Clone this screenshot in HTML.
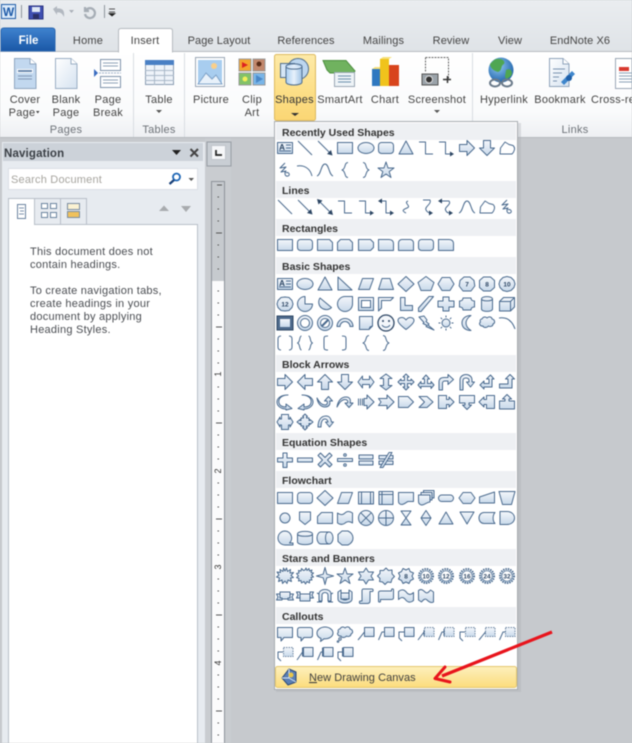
<!DOCTYPE html>
<html><head><meta charset="utf-8"><style>
html,body{margin:0;padding:0;background:#c6c9cd;width:632px;height:743px;overflow:hidden}
svg{display:block;filter:blur(.4px)}
text{font-family:"Liberation Sans",sans-serif;font-size:11px;fill:#444;letter-spacing:.25px}
.m{text-anchor:middle}
.h{font-weight:bold;font-size:10.5px;fill:#333;letter-spacing:0}
.i{fill:url(#g);stroke:#4a6a8e;stroke-width:1;stroke-linejoin:round}
.l{fill:none;stroke:#4a6a8e;stroke-width:1;stroke-linejoin:round}
.n{font-size:6.5px;font-weight:bold;fill:#2d4664;text-anchor:middle;letter-spacing:0}
</style></head><body>
<svg width="632" height="743" viewBox="0 0 632 743" xmlns="http://www.w3.org/2000/svg">
<defs>
<linearGradient id="g" x1="0" y1="0" x2="0" y2="1"><stop offset="0" stop-color="#f4f7fb"/><stop offset="1" stop-color="#c8d9ea"/></linearGradient>
<linearGradient id="top" x1="0" y1="0" x2="0" y2="1"><stop offset="0" stop-color="#eaedf0"/><stop offset="1" stop-color="#dfe3e7"/></linearGradient>
<linearGradient id="rib" x1="0" y1="0" x2="0" y2="1"><stop offset="0" stop-color="#fff"/><stop offset=".7" stop-color="#fafbfc"/><stop offset="1" stop-color="#eef0f3"/></linearGradient>
<linearGradient id="file" x1="0" y1="0" x2="0" y2="1"><stop offset="0" stop-color="#3f83cf"/><stop offset="1" stop-color="#1a57a6"/></linearGradient>
<linearGradient id="yel" x1="0" y1="0" x2="0" y2="1"><stop offset="0" stop-color="#fdeaa8"/><stop offset=".5" stop-color="#fde08a"/><stop offset="1" stop-color="#fbd674"/></linearGradient>
<linearGradient id="yel2" x1="0" y1="0" x2="0" y2="1"><stop offset="0" stop-color="#fdf0bd"/><stop offset="1" stop-color="#fcdc7c"/></linearGradient>
<linearGradient id="doc" x1="0" y1="0" x2="1" y2="1"><stop offset="0" stop-color="#fff"/><stop offset="1" stop-color="#d5e2f0"/></linearGradient>
<linearGradient id="blue" x1="0" y1="0" x2="1" y2="0"><stop offset="0" stop-color="#a9cdf0"/><stop offset=".5" stop-color="#e8f2fb"/><stop offset="1" stop-color="#9cc0e4"/></linearGradient>
<radialGradient id="globe" cx=".4" cy=".35" r=".7"><stop offset="0" stop-color="#8fc8f2"/><stop offset="1" stop-color="#1b5fa8"/></radialGradient>

<symbol id="tb" width="18" height="18"><rect class="i" x="1.500" y="3.500" width="15" height="11"/><text x="6" y="11" style="font-size:8px;font-weight:bold;fill:#2d4664;text-anchor:middle;letter-spacing:0">A</text><path class="l" d="M10 6h5M10 9h5M3 12h12"/></symbol>
<symbol id="ln" width="18" height="18"><path class="l" d="M2 2L16 16"/></symbol>
<symbol id="ar" width="18" height="18"><path class="l" d="M2 2L15 15"/><path d="M16.500 16.500L11 15L15 11Z" fill="#2d4664"/></symbol>
<symbol id="da2" width="18" height="18"><path class="l" d="M3 3L15 15"/><path d="M17 17L11.500 15.500L15.500 11.500ZM1 1L6.500 2.500L2.500 6.500Z" fill="#2d4664"/></symbol>
<symbol id="rc" width="18" height="18"><rect class="i" x="1.500" y="3.500" width="15" height="11"/></symbol>
<symbol id="el" width="18" height="18"><ellipse class="i" cx="9" cy="9" rx="8" ry="5.500"/></symbol>
<symbol id="rr" width="18" height="18"><rect class="i" x="1.500" y="3.500" width="15" height="11" rx="3"/></symbol>
<symbol id="tr" width="18" height="18"><path class="i" d="M9 2L16 15H2Z"/></symbol>
<symbol id="e1" width="18" height="18"><path class="l" d="M2 3H8.500V15H16"/></symbol>
<symbol id="e2" width="18" height="18"><path class="l" d="M2 3H8.500V15H14"/><path d="M17 15L13 12.500V17.500Z" fill="#2d4664"/></symbol>
<symbol id="e3" width="18" height="18"><path class="l" d="M4 3H9V15H14"/><path d="M17 15L13 12.500V17.500ZM1 3L5 .5V5.500Z" fill="#2d4664"/></symbol>
<symbol id="cv" width="18" height="18"><path class="l" d="M11 3C6 5 15 8 10 10S5 13 9 15"/></symbol>
<symbol id="cva" width="18" height="18"><path class="l" d="M6 2H13C15 6 7 9 9 12C10 14 12 15 13 15"/><path d="M16 15L12 12.500V17.500Z" fill="#2d4664"/></symbol>
<symbol id="cvb" width="18" height="18"><path class="l" d="M4 3H12C15 7 6 9 9 13C10 15 12 15 13 15"/><path d="M16 15L12 12.500V17.500ZM1 3L5 .5V5.500Z" fill="#2d4664"/></symbol>
<symbol id="wv" width="18" height="18"><path class="l" d="M1 15C5 14 5 3 9 3S13 14 17 15"/></symbol>
<symbol id="fm" width="18" height="18"><path class="l" d="M2 15L2.500 9L7 3L11 5.500L15 6.500C18 9 16 13 14 15Z"/></symbol>
<symbol id="sq" width="18" height="18"><path class="l" d="M9 2L4 7L10 6L5 11L10 10C8 12 9 16 12 15C15 14 12 10 10 12"/></symbol>
<symbol id="bow" width="18" height="18"><path class="l" d="M1 5C8 4 14 7 16 15"/></symbol>
<symbol id="lb" width="18" height="18"><path class="l" d="M12 1.500C8 1.500 10 8 6 9C10 10 8 16.500 12 16.500"/></symbol>
<symbol id="rb" width="18" height="18"><path class="l" d="M6 1.500C10 1.500 8 8 12 9C8 10 10 16.500 6 16.500"/></symbol>
<symbol id="st" width="18" height="18"><path class="i" d="M9 1L11 7H17L12.200 10.600L14 16.500L9 13L4 16.500L5.800 10.600L1 7H7Z"/></symbol>
<symbol id="rA" width="18" height="18"><path class="i" d="M1.500 5.500H9V1.500L16.500 9L9 16.500V12.500H1.500Z"/></symbol>
<symbol id="lA" width="18" height="18"><path class="i" d="M16.500 5.500H9V1.500L1.500 9L9 16.500V12.500H16.500Z"/></symbol>
<symbol id="uA" width="18" height="18"><path class="i" d="M5.500 16.500V9H1.500L9 1.500L16.500 9H12.500V16.500Z"/></symbol>
<symbol id="dA" width="18" height="18"><path class="i" d="M5.500 1.500V9H1.500L9 16.500L16.500 9H12.500V1.500Z"/></symbol>

<symbol id="s1" width="18" height="18"><path class="i" d="M1.500 3.500H13.500L16.500 6.500V14.500H1.500Z"/></symbol>
<symbol id="s2" width="18" height="18"><path class="i" d="M4.500 3.500H13.500L16.500 6.500V14.500H1.500V6.500Z"/></symbol>
<symbol id="s3" width="18" height="18"><path class="i" d="M4.500 3.500H13.500L16.500 6.500V11.500L13.500 14.500H1.500V3.500Z"/></symbol>
<symbol id="s4" width="18" height="18"><path class="i" d="M1.500 3.500H12C15 3.500 16.500 5 16.500 8V14.500H1.500Z"/></symbol>
<symbol id="s5" width="18" height="18"><path class="i" d="M5 3.500H13C15 3.500 16.500 5 16.500 7V14.500H1.500V7C1.500 5 3 3.500 5 3.500Z"/></symbol>
<symbol id="rt" width="18" height="18"><path class="i" d="M2 2L16 15H2Z"/></symbol>
<symbol id="pa" width="18" height="18"><path class="i" d="M5.500 3.500H16.500L12.500 14.500H1.500Z"/></symbol>
<symbol id="tz" width="18" height="18"><path class="i" d="M5 3.500H13L16.500 14.500H1.500Z"/></symbol>
<symbol id="di" width="18" height="18"><path class="i" d="M9 1.500L17 9L9 16.500L1 9Z"/></symbol>
<symbol id="pe" width="18" height="18"><path class="i" d="M9 1.500L17 7.500L14 15.500H4L1 7.500Z"/></symbol>
<symbol id="he" width="18" height="18"><path class="i" d="M5 2.500H13L17 9L13 15.500H5L1 9Z"/></symbol>
<symbol id="n7" width="18" height="18"><path class="i" d="M6 2H12L16 5.500L16.800 11L13 16H5L1.200 11L2 5.500Z"/><text class="n" x="9" y="11.500">7</text></symbol>
<symbol id="n8" width="18" height="18"><path class="i" d="M5.500 2H12.500L16.500 5.500V12.500L12.500 16H5.500L1.500 12.500V5.500Z"/><text class="n" x="9" y="11.500">8</text></symbol>
<symbol id="n10" width="18" height="18"><path class="i" d="M5 2.500L9 1.500L13 2.500L16 5.500L17 9L16 12.500L13 15.500L9 16.500L5 15.500L2 12.500L1 9L2 5.500Z"/><text class="n" x="9" y="11.500">10</text></symbol>
<symbol id="n12" width="18" height="18"><path class="i" d="M5 2.500L9 2L13 2.500L16 5.500L17 9L16 12.500L13 15.500L9 16L5 15.500L2 12.500L1 9L2 5.500Z"/><text class="n" x="9" y="11.500">12</text></symbol>
<symbol id="pie" width="18" height="18"><path class="i" d="M9 9H16.500A7.500 7.500 0 1 1 9 1.500Z"/></symbol>
<symbol id="cho" width="18" height="18"><path class="i" d="M4 3L15.500 12.500A7.500 7.500 0 0 1 4 3Z"/></symbol>
<symbol id="tea" width="18" height="18"><path class="i" d="M16.500 1.500V9A7.500 7.500 0 1 1 9 1.500Z"/></symbol>
<symbol id="fr" width="18" height="18"><rect class="i" x="1.500" y="2.500" width="15" height="13"/><rect x="4.500" y="5.500" width="9" height="7" fill="#fff" stroke="#4a6a8e"/></symbol>
<symbol id="hf" width="18" height="18"><path class="i" d="M1.500 2.500H16.500L13.500 5.500H4.500V13L1.500 16Z"/></symbol>
<symbol id="L" width="18" height="18"><path class="i" d="M3.500 2.500H8V10.500H15.500V15.500H3.500Z"/></symbol>
<symbol id="dg" width="18" height="18"><path class="i" d="M12 1.500H16.500L4 16.500H1.500V13Z"/></symbol>
<symbol id="cr" width="18" height="18"><path class="i" d="M6 2H12V6H17V12H12V16H6V12H1V6H6Z"/></symbol>
<symbol id="pl" width="18" height="18"><path class="i" d="M5 3H13C13 5 14.500 6 16.500 6V12C14.500 12 13 13 13 15H5C5 13 3.500 12 1.500 12V6C3.500 6 5 5 5 3Z"/></symbol>
<symbol id="can" width="18" height="18"><path class="i" d="M3.500 4C3.500 .8 14.500 .8 14.500 4V14C14.500 17.200 3.500 17.200 3.500 14Z"/><path class="l" d="M3.500 4C3.500 6.500 14.500 6.500 14.500 4"/></symbol>
<symbol id="cu" width="18" height="18"><path class="i" d="M1.500 6.500L5.500 2.500H16.500V12L12.500 16H1.500Z"/><path class="l" d="M1.500 6.500H12.500V16M12.500 6.500L16.500 2.500"/></symbol>
<symbol id="be" width="18" height="18"><rect x="1" y="2" width="16" height="14" fill="#4d6a8c" stroke="#2d4664"/><rect x="4" y="5" width="10" height="8" fill="url(#g)"/></symbol>
<symbol id="do" width="18" height="18"><circle class="i" cx="9" cy="9" r="7.500"/><circle cx="9" cy="9" r="4.500" fill="#fff" stroke="#4a6a8e"/></symbol>
<symbol id="no" width="18" height="18"><circle class="i" cx="9" cy="9" r="7.500"/><circle cx="9" cy="9" r="4.500" fill="#fff" stroke="#4a6a8e"/><path d="M5.500 12.500L12.500 5.500" stroke="#4a6a8e" stroke-width="2"/></symbol>
<symbol id="bl" width="18" height="18"><path class="i" d="M1 12.500A8 8 0 0 1 17 12.500H14A5 5 0 0 0 4 12.500Z"/></symbol>
<symbol id="fo" width="18" height="18"><path class="i" d="M2.500 2.500H15.500V12L12 15.500H2.500Z"/><path class="l" d="M12 15.500L13 13L15.500 12"/></symbol>
<symbol id="sm" width="18" height="18"><circle cx="9" cy="9" r="8" fill="#f4f7fb" stroke="#2d4664" stroke-width="1.300"/><circle cx="6" cy="7" r="1" fill="#2d4664"/><circle cx="12" cy="7" r="1" fill="#2d4664"/><path class="l" d="M5 11C7 14 11 14 13 11"/></symbol>
<symbol id="ht" width="18" height="18"><path class="i" d="M9 15.500C3 11 1 8.500 1 6.500C1 3.500 6 2 9 6C12 2 17 3.500 17 6.500C17 8.500 15 11 9 15.500Z"/></symbol>
<symbol id="lg" width="18" height="18"><path class="i" d="M2 3L7 2L10 6L9 7.500L12 10L11 11L17 16L9 12.500L10 11.500L6 9.500L7 8.500Z"/></symbol>
<symbol id="su" width="18" height="18"><circle class="i" cx="9" cy="9" r="4"/><path class="l" d="M9 1.500V3.500M9 14.500V16.500M1.500 9H3.500M14.500 9H16.500M3.700 3.700L5.100 5.100M12.900 12.900L14.300 14.300M14.300 3.700L12.900 5.100M5.100 12.900L3.700 14.300"/></symbol>
<symbol id="mo" width="18" height="18"><path class="i" d="M13 1.500C7 1.500 4 5 4 9S7 16.500 13 16.500C9 14 8 11.500 8 9S9 4 13 1.500Z"/></symbol>
<symbol id="cl" width="18" height="18"><path class="i" d="M4 5C5 2.500 8 2.500 9 4C11 2 14 3 14 5C17 5.500 17.500 9 15 10C15 12.500 12 13 10.500 12C9 14 5.500 14 5 12C2 12.500 .5 9.500 2.500 8C1.500 6.500 2.500 5 4 5Z"/></symbol>
<symbol id="lk" width="18" height="18"><path class="l" d="M1 4C8 3 14 6 17 15"/></symbol>
<symbol id="bp" width="18" height="18"><path class="l" d="M5 2C2 2 2 4 2 5V13C2 14 2 16 5 16M13 2C16 2 16 4 16 5V13C16 14 16 16 13 16"/></symbol>
<symbol id="bq" width="18" height="18"><path class="l" d="M5.500 2C3 2 4.500 8 1.500 9C4.500 10 3 16 5.500 16M12.500 2C15 2 13.500 8 16.500 9C13.500 10 15 16 12.500 16"/></symbol>
<symbol id="lk2" width="18" height="18"><path class="l" d="M12 2C8 2 8 3 8 5V13C8 15 8 16 12 16"/></symbol>
<symbol id="rk2" width="18" height="18"><path class="l" d="M6 2C10 2 10 3 10 5V13C10 15 10 16 6 16"/></symbol>

<symbol id="lr" width="18" height="18"><path class="i" d="M1 9L5.500 3V6.500H12.500V3L17 9L12.500 15V11.500H5.500V15Z"/></symbol>
<symbol id="ud" width="18" height="18"><path class="i" d="M9 1L15 5.500H11.500V12.500H15L9 17L3 12.500H6.500V5.500H3Z"/></symbol>
<symbol id="qd" width="18" height="18"><path class="i" d="M9 1L12 4H10.500V7.500H14V6L17 9L14 12V10.500H10.500V14H12L9 17L6 14H7.500V10.500H4V12L1 9L4 6V7.500H7.500V4H6Z"/></symbol>
<symbol id="lru" width="18" height="18"><path class="i" d="M9 2L12.500 6H10.500V10.500H14V8.500L17 12L14 15.500V13.500H4V15.500L1 12L4 8.500V10.500H7.500V6H5.500Z"/></symbol>
<symbol id="bt" width="18" height="18"><path class="i" d="M2 17V9C2 6 4 4.500 7 4.500H11V1.500L16.500 6.500L11 11.500V8H8C6.500 8 5.500 9 5.500 10V17Z"/></symbol>
<symbol id="ut" width="18" height="18"><path class="i" d="M2 17V7C2 3.500 5 1.500 8 1.500S14 3.500 14 7V9H16.500L12.500 14L8.500 9H11V7.500C11 6 10 5 8 5S5 6 5 7.500V17Z"/></symbol>
<symbol id="lu" width="18" height="18"><path class="i" d="M2 12L6 8V10.500H11V6H8.500L12.500 2L16 6H14V14H6V16Z"/></symbol>
<symbol id="bu" width="18" height="18"><path class="i" d="M1.500 11H10V6H7.500L12 1.500L16.500 6H14V15H1.500Z"/></symbol>
<symbol id="cR" width="18" height="18"><path class="i" d="M12 2C5 2 2 6 3 10S8 14 10 14V11L16 15.500L10 17V16C5 16 1 13 1 9S5 2 12 2Z"/></symbol>
<symbol id="cL" width="18" height="18"><path class="i" d="M6 2C13 2 16 6 15 10S10 14 8 14V11L2 15.500L8 17V16C13 16 17 13 17 9S13 2 6 2Z"/></symbol>
<symbol id="cU" width="18" height="18"><path class="i" d="M1 5C2 12 6 14 9 14S15 12 13.500 8H16.500L12.500 3.500L8.500 8H11C12 10 11 12 9 12C6 12 3 9 1 5Z"/></symbol>
<symbol id="cD" width="18" height="18"><path class="i" d="M1 14C2 7 6 4 10 4S15 7 14 10H17L13 14.500L9 10H11.500C12.500 8 11 6.500 9 6.500C6 6.500 3 10 1 14Z"/></symbol>
<symbol id="sR" width="18" height="18"><path class="i" d="M7 5.500H10V2L17 9L10 16V12.500H7Z"/><path class="l" d="M1.500 5.500V12.500M3.500 5.500V12.500M5.500 5.500V12.500"/></symbol>
<symbol id="nR" width="18" height="18"><path class="i" d="M1.500 5.500H10V2L17 9L10 16V12.500H1.500L4 9Z"/></symbol>
<symbol id="pg" width="18" height="18"><path class="i" d="M1.500 3.500H11L16.500 9L11 14.500H1.500Z"/></symbol>
<symbol id="ch" width="18" height="18"><path class="i" d="M2 3.500H10L16 9L10 14.500H2L7.500 9Z"/></symbol>
<symbol id="cRc" width="18" height="18"><path class="i" d="M1.500 2.500H9.500V6.500H12V4L17 9L12 14V11.500H9.500V15.500H1.500Z"/></symbol>
<symbol id="cDc" width="18" height="18"><path class="i" d="M1.500 2.500H16.500V10H11V12H13.500L9 16.500L4.500 12H7V10H1.500Z"/></symbol>
<symbol id="cLc" width="18" height="18"><path class="i" d="M16.500 2.500H8.500V6.500H6V4L1 9L6 14V11.500H8.500V15.500H16.500Z"/></symbol>
<symbol id="cUc" width="18" height="18"><path class="i" d="M1.500 16V8H7V6H4.500L9 1.500L13.500 6H11V8H16.500V16Z"/></symbol>
<symbol id="cLR" width="18" height="18"><path class="i" d="M5.500 1.500H12.500V6H14V4L17 9L14 14V12H12.500V16.500H5.500V12H4V14L1 9L4 4V6H5.500Z"/></symbol>
<symbol id="cQ" width="18" height="18"><path class="i" d="M9 1L11.500 3.500H10.500V5H13V7.500H14V6.500L17 9L14 11.500V10.500H13V13H10.500V14.500H11.500L9 17L6.500 14.500H7.500V13H5V10.500H4V11.500L1 9L4 6.500V7.500H5V5H7.500V3.500H6.500Z"/></symbol>
<symbol id="ci" width="18" height="18"><path class="i" d="M2 14C2 7 5 3 10 3C14 3 15 6 15.500 9H17.500L13.500 14L9.500 9H12C11.500 7 10.500 6 9 6C6.500 6 5 9 5 14Z"/></symbol>

<symbol id="pls" width="18" height="18"><path class="i" d="M7 2H11V7H16.500V11H11V16.500H7V11H1.500V7H7Z"/></symbol>
<symbol id="min" width="18" height="18"><rect class="i" x="1.500" y="7" width="15" height="4"/></symbol>
<symbol id="mu" width="18" height="18"><path class="i" d="M4.500 2L9 6.500L13.500 2L16 4.500L11.500 9L16 13.500L13.500 16L9 11.500L4.500 16L2 13.500L6.500 9L2 4.500Z"/></symbol>
<symbol id="dv" width="18" height="18"><rect class="i" x="1.500" y="7.500" width="15" height="3"/><circle class="i" cx="9" cy="4" r="1.300"/><circle class="i" cx="9" cy="14" r="1.300"/></symbol>
<symbol id="eq" width="18" height="18"><rect class="i" x="2" y="4" width="14" height="4"/><rect class="i" x="2" y="10" width="14" height="4"/></symbol>
<symbol id="ne" width="18" height="18"><rect class="i" x="2" y="4.500" width="14" height="3.500"/><rect class="i" x="2" y="10" width="14" height="3.500"/><path class="i" d="M12 1.500H15L6 16.500H3Z"/></symbol>

<symbol id="fp" width="18" height="18"><rect class="i" x="1.500" y="3" width="15" height="12"/><path class="l" d="M4.500 3V15M13.500 3V15"/></symbol>
<symbol id="fi" width="18" height="18"><rect class="i" x="2" y="2.500" width="14" height="13"/><path class="l" d="M5 2.500V15.500M2 5.500H16"/></symbol>
<symbol id="fd" width="18" height="18"><path class="i" d="M1.500 3.500H16.500V12.500H11C9.500 13 7 15.500 5 15.500C2.500 15.500 1.500 14 1.500 12.500Z"/></symbol>
<symbol id="fm2" width="18" height="18"><path class="i" d="M6.500 1.500H17V9H15V3.500H6.500Z"/><path class="i" d="M4 3.500H15V11H13V6H4Z"/><path class="i" d="M1.500 6H13V13C10 13 7 16.500 4.500 16C2.500 15.500 1.500 14 1.500 12.500Z"/></symbol>
<symbol id="ft" width="18" height="18"><rect class="i" x="1.500" y="6" width="15" height="6.500" rx="3.200"/></symbol>
<symbol id="fpr" width="18" height="18"><path class="i" d="M5 3.500H13L17 9L13 14.500H5L1 9Z"/></symbol>
<symbol id="fmi" width="18" height="18"><path class="i" d="M1.500 8L16.500 3V14H1.500Z"/></symbol>
<symbol id="fmo" width="18" height="18"><path class="i" d="M1 2.500H17L13.500 15.500H4.500Z"/></symbol>
<symbol id="fc" width="18" height="18"><circle class="i" cx="9" cy="9" r="5"/></symbol>
<symbol id="fo2" width="18" height="18"><path class="i" d="M3.500 3H14.500V11L9 15.500L3.500 11Z"/></symbol>
<symbol id="fca" width="18" height="18"><path class="i" d="M5.500 3.500H16.500V14.500H1.500V7.500Z"/></symbol>
<symbol id="fta" width="18" height="18"><path class="i" d="M1.500 4C5 7 8 5 9.500 3.500C12 1.500 15 3 16.500 4V14C13 11.500 10 13 8.500 14.500C6 16 3.500 15.500 1.500 14Z"/></symbol>
<symbol id="fs" width="18" height="18"><circle class="i" cx="9" cy="9" r="7.500"/><path class="l" d="M3.800 3.800L14.200 14.200M14.200 3.800L3.800 14.200"/></symbol>
<symbol id="fo3" width="18" height="18"><circle class="i" cx="9" cy="9" r="7.500"/><path class="l" d="M1.500 9H16.500M9 1.500V16.500"/></symbol>
<symbol id="fco" width="18" height="18"><path class="i" d="M4 2H14L4 16H14Z"/></symbol>
<symbol id="fso" width="18" height="18"><path class="i" d="M9 1.500L14 9L9 16.500L4 9Z"/><path class="l" d="M4 9H14"/></symbol>
<symbol id="fe" width="18" height="18"><path class="i" d="M9 3L16 15H2Z"/></symbol>
<symbol id="fme" width="18" height="18"><path class="i" d="M2 3H16L9 15Z"/></symbol>
<symbol id="fst" width="18" height="18"><path class="i" d="M6 3.500H17C14.500 6 14.500 12 17 14.500H6C3 14.500 1 12 1 9S3 3.500 6 3.500Z"/></symbol>
<symbol id="fde" width="18" height="18"><path class="i" d="M2 2.500H9C13.500 2.500 16.500 5.500 16.500 9S13.500 15.500 9 15.500H2Z"/></symbol>
<symbol id="fq" width="18" height="18"><path class="i" d="M9 2A7 7 0 1 0 9 16H17V14H13.500A7 7 0 0 0 9 2Z"/></symbol>
<symbol id="fdk" width="18" height="18"><path class="i" d="M1.500 5C1.500 1.500 16.500 1.500 16.500 5V13C16.500 16.500 1.500 16.500 1.500 13Z"/><path class="l" d="M1.500 5C1.500 8 16.500 8 16.500 5"/></symbol>
<symbol id="fda" width="18" height="18"><path class="i" d="M5 3H13C15.500 3 17 6 17 9S15.500 15 13 15H5C2.500 15 1 12 1 9S2.500 3 5 3Z"/><path class="l" d="M13 3C10.500 3 9.500 6 9.500 9S10.500 15 13 15"/></symbol>
<symbol id="fdi" width="18" height="18"><path class="i" d="M6 2H12C15 3.500 17 6 17 9S15 14.500 12 16H6L2 12.500V5.500Z"/></symbol>

<symbol id="x1" width="18" height="18"><path class="i" d="M9 4L10.500 1L11.500 4.500L14.500 2.500L14 6L17.500 5.500L15 8.500L17.500 10.500L14.500 11L15.500 14.500L12 13L11 16.500L9 14L6.500 16.500L6 13L2.500 14.500L3.500 11L.5 10L3 8L1 5L4.500 5.500L4 2.500L7 4.500L7.500 1Z"/></symbol>
<symbol id="x2" width="18" height="18"><path class="i" d="M9 3L10 1L11 3.500L13 1.500L13.500 4L16 3L15 5.500L17.500 6L15.500 8L17.500 10L15 10.500L16 13L13.500 13L13.500 16L11 14.500L9.500 17L8 14.500L5.500 16L5 13.500L2.500 14L3 11.500L.5 10.500L2.500 9L.5 6.500L3 6L2.500 3.500L5 4L5.500 1.500L7.500 3.500Z"/></symbol>
<symbol id="s4s" width="18" height="18"><path class="i" d="M9 .5L10.800 7.200L17.500 9L10.800 10.800L9 17.500L7.200 10.800L.5 9L7.200 7.200Z"/></symbol>
<symbol id="s6" width="18" height="18"><path class="i" d="M9 1L11.500 5H16.500L14 9L16.500 13H11.500L9 17L6.500 13H1.500L4 9L1.500 5H6.500Z"/></symbol>
<symbol id="s7" width="18" height="18"><path class="i" d="M9 1L11.500 3.500L15 3L15 6.800L17.500 9.500L15 12L14 15.500L10.500 15L8 17.500L5.500 15L2.500 14.500L3 11.500L.5 9L3 6.500L3 3.500L6.500 3.500Z"/></symbol>
<symbol id="sn" width="18" height="18"><circle cx="9" cy="9" r="7" fill="url(#g)" stroke="#4a6a8e" stroke-width="2" stroke-dasharray="1.400 1"/><circle cx="9" cy="9" r="5.200" fill="#fff" stroke="#4a6a8e" stroke-width=".7"/></symbol>
<symbol id="s8" width="18" height="18"><path class="i" d="M6 1.500L9 3L12 1.500L13 4.500L16.500 6L15 9L16.500 12L13.500 13.500L12 16.500L9 15L6 16.500L4.500 13.500L1.500 12L3 9L1.500 6L4.500 4.500Z"/></symbol>
<symbol id="ru" width="18" height="18"><path class="i" d="M4 5H14V12H4Z"/><path class="i" d="M4 7H.5L2 10L.5 13H6V11H4ZM14 7H17.500L16 10L17.500 13H12V11H14Z"/></symbol>
<symbol id="rd" width="18" height="18"><path class="i" d="M4 7H14V14H4Z"/><path class="i" d="M4 5H.5L2 8L.5 11H4ZM14 5H17.500L16 8L17.500 11H14Z"/></symbol>
<symbol id="cu1" width="18" height="18"><path class="i" d="M3 14V7C3 4 6 2.500 9 2.500S15 4 15 7V14H12V8C12 6.500 10.500 5.500 9 5.500S6 6.500 6 8V14Z"/><path class="l" d="M1 6L3 7M17 6L15 7M1 15H6M12 15H17"/></symbol>
<symbol id="cu2" width="18" height="18"><path class="i" d="M5 3V10C5 12 7 13 9 13S13 12 13 10V3L16 5V12C16 15 12 16 9 16S2 15 2 12V5Z"/><path class="i" d="M5 6H13V12H5Z"/></symbol>
<symbol id="sc1" width="18" height="18"><path class="i" d="M6 2H15C16.500 2 16.500 4.500 15 4.500H13V14C13 16.500 11 16.500 10 16.500H3.500C2 16.500 2 14 3.500 14H5V4C5 3 5.500 2 6 2Z"/></symbol>
<symbol id="sc2" width="18" height="18"><path class="i" d="M1.500 5.500C1.500 4 3 4 4 4H14.500V3C14.500 1.500 16.500 1.500 16.500 3V11C16.500 12.500 15 12.500 14 12.500H3.500V14C3.500 15.500 1.500 15.500 1.500 14Z"/></symbol>
<symbol id="wa" width="18" height="18"><path class="i" d="M1.500 4.500C5 1.500 8 3 10 6C12 8 14 8 16.500 5.500V13.500C13 16.500 10 15 8 12C6 10 4 10 1.500 12.500Z"/></symbol>
<symbol id="wb" width="18" height="18"><path class="i" d="M1.500 3.500C4 1.500 6 3 8 5C10 7 12 5 13.500 3L16.500 5V15C14 16.500 12 15 10 13C8 11 6 13 4.500 15L1.500 13Z"/></symbol>

<symbol id="cb1" width="18" height="18"><path class="i" d="M1.500 2.500H16.500V12.500H8L5 16V12.500H1.500Z"/></symbol>
<symbol id="cb2" width="18" height="18"><path class="i" d="M4 2.500H14C15.500 2.500 16.500 3.500 16.500 5V10C16.500 11.500 15.500 12.500 14 12.500H8L5 16V12.500H4C2.500 12.500 1.500 11.500 1.500 10V5C1.500 3.500 2.500 2.500 4 2.500Z"/></symbol>
<symbol id="cb3" width="18" height="18"><path class="i" d="M5 13.500L4.500 16.500L8 13.800C13 14 17 11.500 17 8S13 2 9 2S1 4.500 1 8C1 10.500 2.500 12.500 5 13.500Z"/></symbol>
<symbol id="cb4" width="18" height="18"><path class="i" d="M4 4C5 1.500 8 1.500 9 3C11 1 14 2 14 4C17 4.500 17.500 8 15 9C15 11.500 12 12 10.500 11C9 13 5.500 13 5 11C2 11.500 .5 8.500 2.500 7C1.500 5.500 2.500 4 4 4Z"/><circle class="l" cx="4" cy="14" r="1.200"/><circle class="l" cx="2" cy="16.500" r=".8"/></symbol>
<symbol id="c1" width="18" height="18"><rect class="i" x="7.500" y="2.500" width="9.500" height="9"/><path class="l" d="M7.500 7L1 15"/></symbol>
<symbol id="c2" width="18" height="18"><rect class="i" x="7.500" y="2.500" width="9.500" height="9"/><path class="l" d="M7.500 7H5L1.500 15"/></symbol>
<symbol id="c3" width="18" height="18"><rect class="i" x="7.500" y="2.500" width="9.500" height="9"/><path class="l" d="M7.500 7H2V13L5 16"/></symbol>
<symbol id="c4" width="18" height="18"><rect x="7.500" y="2.500" width="9.500" height="9" fill="url(#g)" stroke="#6d86a3" stroke-dasharray="1.500 1"/><path class="l" d="M7 5V11M7 7L1 15"/></symbol>
<symbol id="c5" width="18" height="18"><rect x="7.500" y="2.500" width="9.500" height="9" fill="url(#g)" stroke="#6d86a3" stroke-dasharray="1.500 1"/><path class="l" d="M7 4V11M7 7H5L1.500 15"/></symbol>
<symbol id="c6" width="18" height="18"><rect x="7.500" y="2.500" width="9.500" height="9" fill="url(#g)" stroke="#6d86a3" stroke-dasharray="1.500 1"/><path class="l" d="M7 7H2V13L5 16"/></symbol>
<symbol id="c7" width="18" height="18"><rect x="7.500" y="2.500" width="9.500" height="9" fill="url(#g)" stroke="#6d86a3" stroke-dasharray="1.500 1"/><path class="l" d="M7.500 7L1 15"/></symbol>
<symbol id="c8" width="18" height="18"><rect x="7.500" y="2.500" width="9.500" height="9" fill="url(#g)" stroke="#6d86a3" stroke-dasharray="1.500 1"/><path class="l" d="M7.500 7H5L1.500 15"/></symbol>
<symbol id="c10" width="18" height="18"><rect class="i" x="7.500" y="2.500" width="9.500" height="9"/><path class="l" d="M6.500 2.500V11.500M6.500 7L1 15"/></symbol>
<symbol id="c11" width="18" height="18"><rect class="i" x="7.500" y="2.500" width="9.500" height="9"/><path class="l" d="M6.500 2.500V11.500M6.500 7H5L1.500 15"/></symbol>
<symbol id="c12" width="18" height="18"><rect class="i" x="7.500" y="2.500" width="9.500" height="9"/><path class="l" d="M6.500 2.500V11.500M6.500 7H2V13L5 16"/></symbol>
</defs>

<!-- base -->
<rect width="632" height="743" fill="#c6c9cd"/>
<rect width="632" height="52" fill="url(#top)"/>
<rect y="52" width="632" height="85" fill="url(#rib)"/>
<rect y="137" width="632" height="1" fill="#b6babf"/>
<rect y="51" x="0" width="632" height="1" fill="#b8bcc1"/>

<!-- QAT -->
<rect x="1.500" y="4.500" width="14" height="14" fill="#dcebfa" stroke="#1f5ca8"/>
<text x="8.500" y="16" class="m" style="font-size:12px;font-weight:bold;fill:#1d5aa8;letter-spacing:0">W</text>
<path d="M21.500 5V18M104.500 5V18" stroke="#8e959c"/>
<path d="M29 6H43V19H29Z" fill="#3f4fb2" stroke="#2a3380"/>
<rect x="32" y="7" width="8" height="5" fill="#dfe8f5"/><rect x="33" y="14" width="6" height="5" fill="#2a2f66"/>
<path d="M53 9L57 6V8.500C62 8 65 10 64 17C62 13 60 12 57 12.500V15Z" fill="#b2b8c0"/>
<path d="M69 10H74L71.500 13Z" fill="#aab0b8"/>
<path d="M85 7V11H89M86 10A5 5 0 1 1 85 14" fill="none" stroke="#a6adb5" stroke-width="2.200"/>
<path d="M109 9H115M109 12H115M112 16L109 13.500H115Z" fill="#222" stroke="#222" stroke-width=".8"/>

<!-- tabs -->
<path d="M1 51V31Q1 28 4 28H52Q55 28 55 31V51Z" fill="url(#file)" stroke="#2a66b0"/>
<text x="28.500" y="44" class="m" style="font-size:11.500px;font-weight:bold;fill:#fff;letter-spacing:0">File</text>
<path d="M118.500 52V31Q118.500 28.500 121 28.500H170Q172.500 28.500 172.500 31V52Z" fill="#fff" stroke="#b6babf"/>
<rect x="119" y="50" width="53" height="3" fill="#fff"/>
<g>
<text x="88" y="44" class="m" style="letter-spacing:.2px">Home</text>
<text x="145" y="44" class="m" style="letter-spacing:.2px">Insert</text>
<text x="219" y="44" class="m" style="letter-spacing:.1px">Page Layout</text>
<text x="306" y="44" class="m" style="letter-spacing:.1px">References</text>
<text x="383.500" y="44" class="m" style="letter-spacing:.1px">Mailings</text>
<text x="451" y="44" class="m" style="letter-spacing:.1px">Review</text>
<text x="510" y="44" class="m" style="letter-spacing:.1px">View</text>
<text x="580" y="44" class="m" style="letter-spacing:.1px">EndNote X6</text>
</g>

<!-- group separators -->
<path d="M133.500 53V137M184.500 53V137M472.500 53V137" stroke="#d9dde2"/>

<!-- shapes highlight -->
<rect x="274.500" y="54.500" width="41" height="66" rx="2" fill="url(#yel)" stroke="#dcb95e"/>

<!-- ribbon icons -->
<path d="M14.500 58.500H30L36 64V88.500H14.500Z" fill="#c2d8ef" stroke="#8ea6c0"/><path d="M30 58.500V64H36" fill="#fff" stroke="#8ea6c0"/>
<rect x="17" y="69" width="16" height="4" fill="#fff"/><rect x="18" y="70" width="14" height="2" fill="#6a88ad"/><path d="M18 76H32M18 79H32" stroke="#7f97b3"/>
<path d="M55.500 58.500H71L77 64V88.500H55.500Z" fill="url(#doc)" stroke="#9aaec4"/><path d="M71 58.500V64H77" fill="#fff" stroke="#9aaec4"/>
<rect x="100.500" y="59.500" width="20" height="11" fill="#fff" stroke="#8094ab"/><path d="M103 63H118M103 66H118" stroke="#8ea2b8"/>
<rect x="100.500" y="76.500" width="20" height="11" fill="#fff" stroke="#8094ab"/><path d="M103 80H118M103 83H118" stroke="#8ea2b8"/>
<path d="M94 69L98 73L94 77Z" fill="#3a6cc0"/><path d="M99 73H121" stroke="#9db0c6" stroke-dasharray="2 1"/>
<rect x="145.500" y="60.500" width="28" height="24" fill="#eef3f9" stroke="#8a9cb2"/><rect x="145" y="60" width="29" height="5" fill="#4a80c4"/>
<path d="M145 70.500H174M145 75.500H174M145 80.500H174M154.500 65V85M164.500 65V85" stroke="#a9b8c9"/>
<rect x="195.500" y="57.500" width="29" height="29" fill="#fff" stroke="#9aa7b6"/><rect x="198" y="60" width="24" height="24" fill="#a8cdef"/>
<circle cx="214" cy="66" r="3" fill="#f9cf8a"/><path d="M198 84L206 73L212 79L216 75L222 84Z" fill="#e8f1fa" stroke="#7ea2c8"/>
<rect x="239" y="59" width="12" height="12" fill="#f5a52c" stroke="#9a9a9a"/><rect x="253" y="59" width="12" height="12" fill="#c2886c" stroke="#9a9a9a"/><rect x="239" y="73" width="12" height="12" fill="#82c268" stroke="#9a9a9a"/><rect x="253" y="73" width="12" height="12" fill="#79b5e8" stroke="#9a9a9a"/>
<path d="M242 68L248 65L242 62Z" fill="#d22"/><circle cx="259" cy="64" r="2.500" fill="#5a2c18"/><circle cx="245" cy="79" r="2.500" fill="#f3ef5a"/><path d="M256 75L263 79L256 83Z" fill="#4a88c8"/>
<circle cx="298" cy="69" r="10.500" fill="#bcd6ef" stroke="#4e6d8e"/>
<rect x="280.500" y="63.500" width="14" height="14" fill="#d5e6f6" stroke="#4e6d8e"/>
<path d="M286 66.500C286 63 302 63 302 66.500V82C302 86 286 86 286 82Z" fill="url(#blue)" stroke="#4e6d8e"/><path d="M286 66.500C286 70 302 70 302 66.500" fill="#dcebfa" stroke="#4e6d8e"/>
<path d="M295 116L291 113H299Z" fill="#333"/>
<path d="M323 60.500H346L355 71L347 81H337V73H330L327 70Z" fill="#70b25f" stroke="#4d8f3f"/><rect x="334.500" y="72.500" width="20" height="14" fill="#eef3f7" stroke="#9aa7b4"/><path d="M338 76H351M338 79H351M338 82H351" stroke="#6c8fad"/>
<rect x="372" y="69" width="8" height="17" fill="#2f78c0"/><rect x="380" y="59" width="9" height="27" fill="#f0c31c"/><rect x="389" y="65" width="10" height="21" fill="#d8441c"/>
<path d="M380 59L383 57H392L389 59ZM372 69L375 67H380V69Z" fill="#f6e07a"/>
<path d="M425.500 57.500H448.500V79" fill="none" stroke="#666" stroke-dasharray="2 1"/><path d="M425.500 57.500V72" stroke="#666" stroke-dasharray="2 1"/>
<rect x="422" y="74" width="16" height="11" fill="#9ba3aa" stroke="#555"/><circle cx="429" cy="79.500" r="3.500" fill="#333" stroke="#ddd"/>
<path d="M443 79.500H451M447.500 76V83" stroke="#333" stroke-width="1.500"/>
<path d="M437 113L434 110H440Z" fill="#555"/>
<circle cx="501" cy="70" r="12.500" fill="url(#globe)"/><path d="M494 60C499 57 506 60 504 64C500 66 503 70 498 72C494 71 490 68 490 64ZM506 70C510 68 512 70 512 74C510 78 506 80 505 77Z" fill="#4fa652"/>
<g fill="none" stroke="#6a7a8a" stroke-width="2"><ellipse cx="495" cy="83" rx="5" ry="3.500"/><ellipse cx="507" cy="83" rx="5" ry="3.500"/></g>
<path d="M549.500 58.500H563L569 64V86.500H549.500Z" fill="url(#doc)" stroke="#8ea2ba"/><path d="M563 58.500V64H569" fill="#fff" stroke="#8ea2ba"/><path d="M553 69H565M553 73H562M553 77H559M553 81H557" stroke="#7a93b0"/>
<path d="M561 82L572 71L575 74L564 85Z" fill="#3f86cc"/><circle cx="569" cy="78" r="3" fill="#1f5fa8"/>
<path d="M615.500 58.500H632V88.500H615.500Z" fill="#fff" stroke="#9aa7b6"/><rect x="619" y="67" width="10" height="4" fill="#d83a30"/><path d="M619 73H632M619 76H632M619 79H632M619 82H632" stroke="#8aa0b8"/>

<!-- ribbon labels -->
<g>
<text x="25" y="103" class="m">Cover</text><text x="22" y="116" class="m">Page</text><path d="M36 111L39.500 111L37.750 113.500Z" fill="#444"/>
<text x="66" y="103" class="m">Blank</text><text x="66" y="116" class="m">Page</text>
<text x="108" y="103" class="m">Page</text><text x="108" y="116" class="m">Break</text>
<text x="159" y="103" class="m">Table</text><path d="M156 110H162L159 113Z" fill="#555"/>
<text x="211" y="103" class="m">Picture</text>
<text x="252" y="103" class="m">Clip</text><text x="252" y="116" class="m">Art</text>
<text x="294.500" y="103" class="m" style="fill:#333">Shapes</text>
<text x="340" y="103" class="m">SmartArt</text>
<text x="385" y="103" class="m">Chart</text>
<text x="437" y="103" class="m">Screenshot</text>
<text x="504" y="103" class="m">Hyperlink</text>
<text x="560" y="103" class="m">Bookmark</text>
<text x="591" y="103">Cross-re</text>
<text x="66" y="133" class="m" style="fill:#6d7278">Pages</text>
<text x="159" y="133" class="m" style="fill:#6d7278">Tables</text>
<text x="575" y="133" class="m" style="fill:#6d7278">Links</text>
</g>

<!-- nav pane -->
<rect x="2" y="142" width="203" height="601" fill="#e7ebf0"/>
<rect x="3" y="143" width="200" height="18" fill="#ccd2d9"/>
<text x="4" y="157" style="font-weight:bold;font-size:11.500px;fill:#3a3f45;letter-spacing:.15px">Navigation</text>
<path d="M172 150H181L176.500 155Z" fill="#222"/>
<path d="M190.500 149L198 156.500M198 149L190.500 156.500" stroke="#444" stroke-width="2"/>
<rect x="8.500" y="168.500" width="189" height="21" fill="#fff" stroke="#dbe0e6"/>
<text x="11" y="183" style="fill:#a6a49e;letter-spacing:.2px">Search Document</text>
<circle cx="176.500" cy="177" r="3.500" fill="none" stroke="#1e66b5" stroke-width="1.800"/><path d="M174 180L169.500 184" stroke="#173f78" stroke-width="2.200"/>
<path d="M188.500 178H194L191.250 181Z" fill="#555"/>
<!-- nav tabs -->
<rect x="8.500" y="224.500" width="189" height="530" fill="#fff" stroke="#b8bfc8"/>
<path d="M34.500 224V198.500H86.500V224M60.500 198.500V224" fill="none" stroke="#b8bfc8"/>
<path d="M8.500 225V198.500H34.500V225Z" fill="#fff"/><path d="M8.500 225V198.500H34.500V225" fill="none" stroke="#b8bfc8"/>
<rect x="17.500" y="204.500" width="8" height="14" fill="#fff" stroke="#6c84a0"/><path d="M19 208H24M20 211H24M19 214H24" stroke="#7c92ac"/>
<path d="M41.500 203.500H47.500V208.500H41.500ZM50.500 203.500H56.500V208.500H50.500ZM41.500 212.500H47.500V217.500H41.500ZM50.500 212.500H56.500V217.500H50.500Z" fill="#fff" stroke="#6c84a0"/>
<rect x="67.500" y="203.500" width="12" height="6" fill="#fbf2d2" stroke="#7a8ca0"/><rect x="67.500" y="211.500" width="12" height="6" fill="#f0c15c" stroke="#7a8ca0"/>
<path d="M159 211L164 205.500L169 211Z" fill="#a8abae"/><path d="M181 206H191L186 212Z" fill="#a8abae"/>
<g>
<text x="30" y="255" style="fill:#4a4d52">This document does not</text><text x="30" y="268" style="fill:#4a4d52">contain headings.</text>
<text x="30" y="294" style="fill:#4a4d52">To create navigation tabs,</text><text x="30" y="307" style="fill:#4a4d52">create headings in your</text><text x="30" y="320" style="fill:#4a4d52">document by applying</text><text x="30" y="333" style="fill:#4a4d52">Heading Styles.</text>
</g>

<!-- ruler -->
<rect x="205" y="138" width="26" height="605" fill="#c9ccd0"/>
<rect x="207" y="142" width="24" height="24" fill="#c9ced4" stroke="#979da4"/>
<rect x="211.500" y="145.500" width="14" height="14" fill="#f6f7f9" stroke="#c0c5cb"/>
<path d="M216 150V155H222" fill="none" stroke="#222" stroke-width="1.700"/>
<rect x="211.500" y="181.500" width="13" height="570" fill="#fbfbfc" stroke="#8d939a"/>
<rect x="212" y="182" width="12" height="99" fill="#c6cace"/>
<g stroke="#555" stroke-width="1">
<path d="M217 185H222M217.500 197H219M217.500 209H219M217.500 221H219M216 233H222M217.500 245H219M217.500 257H219M217.500 269H219M217.500 291H219M217.500 303H219M217.500 315H219M216 327H222M217.500 339H219M217.500 351H219M217.500 363H219M217.500 387H219M217.500 399H219M217.500 411H219M216 423H222M217.500 435H219M217.500 447H219M217.500 459H219M217.500 483H219M217.500 495H219M217.500 507H219M216 519H222M217.500 531H219M217.500 543H219M217.500 555H219M217.500 579H219M217.500 591H219M217.500 603H219M216 615H222M217.500 627H219M217.500 639H219M217.500 651H219M217.500 675H219M217.500 687H219M217.500 699H219M216 711H222M217.500 723H219M217.500 735H219"/>
</g>
<text transform="translate(221 374) rotate(-90)" class="m" style="font-size:9px;letter-spacing:0;fill:#333">1</text>
<text transform="translate(221 471) rotate(-90)" class="m" style="font-size:9px;letter-spacing:0;fill:#333">2</text>
<text transform="translate(221 567) rotate(-90)" class="m" style="font-size:9px;letter-spacing:0;fill:#333">3</text>
<text transform="translate(221 663) rotate(-90)" class="m" style="font-size:9px;letter-spacing:0;fill:#333">4</text>

<!-- menu -->
<rect x="276" y="123" width="245" height="569" fill="#a9adb2" opacity=".35"/>
<rect x="274.500" y="121.500" width="243" height="568" fill="#fff" stroke="#a8acb1"/>
<g fill="#eef0f3">
<rect x="276" y="123" width="240" height="17"/><rect x="276" y="181" width="240" height="17"/><rect x="276" y="219" width="240" height="17"/><rect x="276" y="257" width="240" height="17"/><rect x="276" y="355" width="240" height="17"/><rect x="276" y="433" width="240" height="17"/><rect x="276" y="471" width="240" height="17"/><rect x="276" y="549" width="240" height="17"/><rect x="276" y="607" width="240" height="17"/>
</g>
<g>
<text x="282" y="136" class="h">Recently Used Shapes</text>
<text x="282" y="194" class="h">Lines</text>
<text x="282" y="232" class="h">Rectangles</text>
<text x="282" y="270" class="h">Basic Shapes</text>
<text x="282" y="368" class="h">Block Arrows</text>
<text x="282" y="446" class="h">Equation Shapes</text>
<text x="282" y="484" class="h">Flowchart</text>
<text x="282" y="562" class="h">Stars and Banners</text>
<text x="282" y="620" class="h">Callouts</text>
</g>

<!-- Recently used -->
<g transform="translate(276 139)"><use href="#tb" x="0"/><use href="#ln" x="20"/><use href="#ar" x="40"/><use href="#rc" x="60"/><use href="#el" x="81"/><use href="#rr" x="101"/><use href="#tr" x="121"/><use href="#e1" x="141"/><use href="#e2" x="161"/><use href="#rA" x="182"/><use href="#dA" x="202"/><use href="#fm" x="222"/></g>
<g transform="translate(276 161)"><use href="#sq" x="0"/><use href="#bow" x="20"/><use href="#wv" x="40"/><use href="#lb" x="60"/><use href="#rb" x="81"/><use href="#st" x="101"/></g>
<!-- Lines -->
<g transform="translate(276 198)"><use href="#ln" x="0"/><use href="#ar" x="20"/><use href="#da2" x="40"/><use href="#e1" x="60"/><use href="#e2" x="81"/><use href="#e3" x="101"/><use href="#cv" x="121"/><use href="#cva" x="141"/><use href="#cvb" x="161"/><use href="#wv" x="182"/><use href="#fm" x="202"/><use href="#sq" x="222"/></g>
<!-- Rectangles -->
<g transform="translate(276 236)"><use href="#rc" x="0"/><use href="#rr" x="20"/><use href="#s1" x="40"/><use href="#s2" x="60"/><use href="#s3" x="81"/><use href="#s4" x="101"/><use href="#s5" x="121"/><use href="#rr" x="141"/><use href="#s4" x="161"/></g>
<!-- Basic -->
<g transform="translate(276 275)"><use href="#tb" x="0"/><use href="#el" x="20"/><use href="#tr" x="40"/><use href="#rt" x="60"/><use href="#pa" x="81"/><use href="#tz" x="101"/><use href="#di" x="121"/><use href="#pe" x="141"/><use href="#he" x="161"/><use href="#n7" x="182"/><use href="#n8" x="202"/><use href="#n10" x="222"/></g>
<g transform="translate(276 295)"><use href="#n12" x="0"/><use href="#pie" x="20"/><use href="#cho" x="40"/><use href="#tea" x="60"/><use href="#fr" x="81"/><use href="#hf" x="101"/><use href="#L" x="121"/><use href="#dg" x="141"/><use href="#cr" x="161"/><use href="#pl" x="182"/><use href="#can" x="202"/><use href="#cu" x="222"/></g>
<g transform="translate(276 314)"><use href="#be" x="0"/><use href="#do" x="20"/><use href="#no" x="40"/><use href="#bl" x="60"/><use href="#fo" x="81"/><use href="#sm" x="101"/><use href="#ht" x="121"/><use href="#lg" x="141"/><use href="#su" x="161"/><use href="#mo" x="182"/><use href="#cl" x="202"/><use href="#lk" x="222"/></g>
<g transform="translate(276 334)"><use href="#bp" x="0"/><use href="#bq" x="20"/><use href="#lk2" x="40"/><use href="#rk2" x="60"/><use href="#lb" x="81"/><use href="#rb" x="101"/></g>
<!-- Block arrows -->
<g transform="translate(276 373)"><use href="#rA" x="0"/><use href="#lA" x="20"/><use href="#uA" x="40"/><use href="#dA" x="60"/><use href="#lr" x="81"/><use href="#ud" x="101"/><use href="#qd" x="121"/><use href="#lru" x="141"/><use href="#bt" x="161"/><use href="#ut" x="182"/><use href="#lu" x="202"/><use href="#bu" x="222"/></g>
<g transform="translate(276 393)"><use href="#cR" x="0"/><use href="#cL" x="20"/><use href="#cU" x="40"/><use href="#cD" x="60"/><use href="#sR" x="81"/><use href="#nR" x="101"/><use href="#pg" x="121"/><use href="#ch" x="141"/><use href="#cRc" x="161"/><use href="#cDc" x="182"/><use href="#cLc" x="202"/><use href="#cUc" x="222"/></g>
<g transform="translate(276 413)"><use href="#cLR" x="0"/><use href="#cQ" x="20"/><use href="#ci" x="40"/></g>
<!-- Equation -->
<g transform="translate(276 451)"><use href="#pls" x="0"/><use href="#min" x="20"/><use href="#mu" x="40"/><use href="#dv" x="60"/><use href="#eq" x="81"/><use href="#ne" x="101"/></g>
<!-- Flowchart -->
<g transform="translate(276 489)"><use href="#rc" x="0"/><use href="#rr" x="20"/><use href="#di" x="40"/><use href="#pa" x="60"/><use href="#fp" x="81"/><use href="#fi" x="101"/><use href="#fd" x="121"/><use href="#fm2" x="141"/><use href="#ft" x="161"/><use href="#fpr" x="182"/><use href="#fmi" x="202"/><use href="#fmo" x="222"/></g>
<g transform="translate(276 509)"><use href="#fc" x="0"/><use href="#fo2" x="20"/><use href="#fca" x="40"/><use href="#fta" x="60"/><use href="#fs" x="81"/><use href="#fo3" x="101"/><use href="#fco" x="121"/><use href="#fso" x="141"/><use href="#fe" x="161"/><use href="#fme" x="182"/><use href="#fst" x="202"/><use href="#fde" x="222"/></g>
<g transform="translate(276 529)"><use href="#fq" x="0"/><use href="#fdk" x="20"/><use href="#fda" x="40"/><use href="#fdi" x="60"/></g>
<!-- Stars -->
<g transform="translate(276 567)"><use href="#x1" x="0"/><use href="#x2" x="20"/><use href="#s4s" x="40"/><use href="#st" x="60"/><use href="#s6" x="81"/><use href="#s7" x="101"/><use href="#s8" x="121"/><use href="#sn" x="141"/><use href="#sn" x="161"/><use href="#sn" x="182"/><use href="#sn" x="202"/><use href="#sn" x="222"/>
<text class="n" x="130" y="11.500">8</text><text class="n" x="150" y="11.500">10</text><text class="n" x="170" y="11.500">12</text><text class="n" x="191" y="11.500">16</text><text class="n" x="211" y="11.500">24</text><text class="n" x="231" y="11.500">32</text></g>
<g transform="translate(276 587)"><use href="#ru" x="0"/><use href="#rd" x="20"/><use href="#cu1" x="40"/><use href="#cu2" x="60"/><use href="#sc1" x="81"/><use href="#sc2" x="101"/><use href="#wa" x="121"/><use href="#wb" x="141"/></g>
<!-- Callouts -->
<g transform="translate(276 625)"><use href="#cb1" x="0"/><use href="#cb2" x="20"/><use href="#cb3" x="40"/><use href="#cb4" x="60"/><use href="#c1" x="81"/><use href="#c2" x="101"/><use href="#c3" x="121"/><use href="#c4" x="141"/><use href="#c5" x="161"/><use href="#c6" x="182"/><use href="#c7" x="202"/><use href="#c8" x="222"/></g>
<g transform="translate(276 645)"><use href="#c6" x="0"/><use href="#c10" x="20"/><use href="#c11" x="40"/><use href="#c12" x="60"/></g>

<!-- new drawing canvas -->
<rect x="275.500" y="666.500" width="241" height="21" rx="2" fill="url(#yel2)" stroke="#e4c76f"/>
<path d="M282 678L289 669L296 672V682L288 685Z" fill="#5a7fb5" stroke="#2c4a78"/><path d="M289 669V678L282 678M289 678L296 682" stroke="#d9e5f3" fill="none"/><circle cx="291" cy="675" r="2.500" fill="#e8c64a"/>
<text x="309" y="681" style="fill:#3d3d3d;letter-spacing:.05px"><tspan text-decoration="underline">N</tspan>ew Drawing Canvas</text>

<!-- red arrow -->
<path d="M552 632L442 676" stroke="#e8141c" stroke-width="3.200" fill="none"/>
<path d="M445 667L435 678.500L450 682" stroke="#e8141c" stroke-width="3" fill="none" stroke-linejoin="round" stroke-linecap="round"/>
</svg>
</body></html>
